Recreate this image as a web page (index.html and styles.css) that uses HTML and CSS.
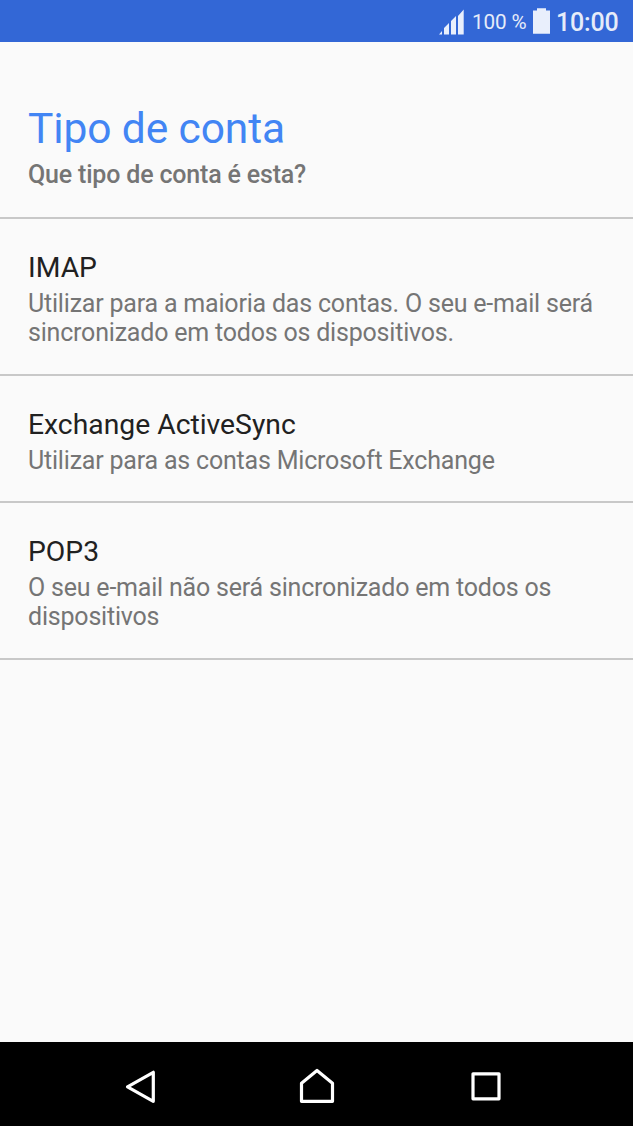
FILE: index.html
```html
<!DOCTYPE html>
<html lang="pt">
<head>
<meta charset="utf-8">
<title>Tipo de conta</title>
<link rel="stylesheet" href="styles.css">
</head>
<body>
<div class="screen">
  <div class="status-bar">
    <svg class="signal" width="25" height="26" viewBox="439 9 25 26"><path d="M439 34.500l3-3.500v3.500zM444 34.500v-6.500l5-5v11.500zM451 34.500v-13.500l5-5v18.500zM458 34.500v-18.500l5.700-6.500v25z"/></svg>
    <span class="percent">100 %</span>
    <svg class="battery" width="17" height="26" viewBox="533 8 17 26"><path d="M537 8.300h9v2.200h4v23.200h-17V10.500h4z"/></svg>
    <span class="clock">10:00</span>
  </div>
  <main class="content">
    <header class="header">
      <h1 class="title">Tipo de conta</h1>
      <p class="subtitle">Que tipo de conta é esta?</p>
    </header>
    <section class="option tall">
      <h2 class="name">IMAP</h2>
      <p class="detail">Utilizar para a maioria das contas. O seu e-mail será<br>sincronizado em todos os dispositivos.</p>
    </section>
    <section class="option">
      <h2 class="name">Exchange ActiveSync</h2>
      <p class="detail">Utilizar para as contas Microsoft Exchange</p>
    </section>
    <section class="option tall">
      <h2 class="name">POP3</h2>
      <p class="detail">O seu e-mail não será sincronizado em todos os<br>dispositivos</p>
    </section>
  </main>
  <nav class="nav-bar">
    <svg width="633" height="84" viewBox="0 1042 633 84" fill="none" stroke="#fff" stroke-width="3.200" stroke-linejoin="round"><path d="M153.300 1072.300v29L127.500 1086.800z"/><path d="M301.500 1101.300v-18L317 1070.500l15.500 12.800v18z"/><path d="M473 1073.800h26v25h-26z"/></svg>
  </nav>
</div>
</body>
</html>
```
FILE: styles.css
```css
* { box-sizing: border-box; margin: 0; padding: 0; }
body { font-family: Roboto, sans-serif; background: #fafafa; }
.screen { width: 633px; height: 1126px; display: flex; flex-direction: column; overflow: hidden; }
.status-bar { height: 42px; background: #3367d6; color: #e6ecf9; display: flex; align-items: center; justify-content: flex-end; padding-right: 14px; }
.signal, .battery { fill: #e9effc; flex: none; }
.signal { margin-top: 2px; }
.percent { font-size: 20.7px; line-height: 24px; width: 55px; margin: 2px 6px 0 8px; letter-spacing: -0.1px; white-space: nowrap; }
.clock { font-size: 25px; line-height: 30px; width: 63px; font-weight: 500; margin: 4px 0 0 6px; letter-spacing: -0.2px; }
.content { flex: 1; }
.header { height: 177px; padding: 62px 28px 0; border-bottom: 2px solid #c8c8c8; }
.title { font-size: 42.5px; line-height: 50px; font-weight: 400; color: #4285f4; letter-spacing: -0.1px; }
.subtitle { font-size: 25px; line-height: 29px; padding-top: 6px; font-weight: 500; color: #757575; letter-spacing: -0.18px; }
.option { height: 127px; padding: 31px 28px 0; border-bottom: 2px solid #c8c8c8; }
.tall { height: 157px; }
.name { font-size: 28.3px; line-height: 35px; font-weight: 400; color: #212121; }
.detail { font-size: 25px; line-height: 29px; padding-top: 4px; color: #757575; letter-spacing: -0.2px; white-space: nowrap; }
.nav-bar { height: 84px; background: #000; }
.nav-bar svg { display: block; }
```
